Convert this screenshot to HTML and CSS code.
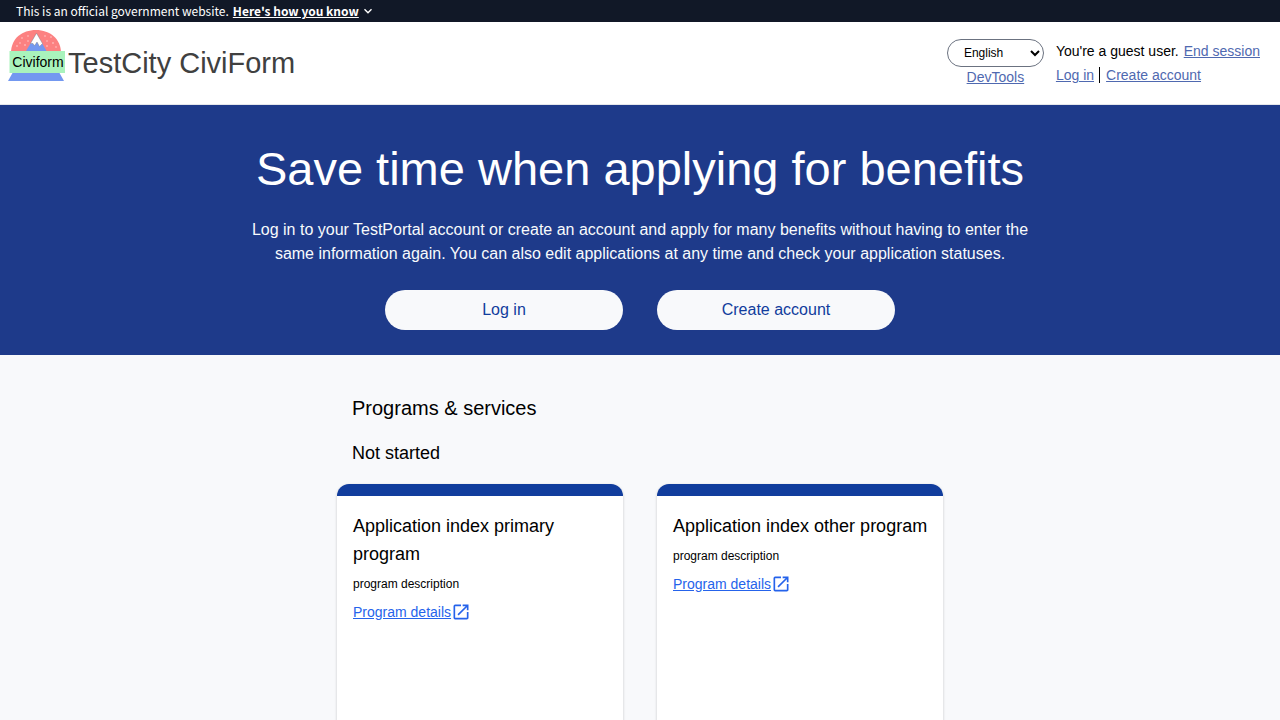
FILE: index.html
```html
<!DOCTYPE html>
<html lang="en">
<head>
<meta charset="utf-8">
<meta name="viewport" content="width=device-width, initial-scale=1">
<title>TestCity CiviForm</title>
<link rel="stylesheet" href="styles.css">
</head>
<body>
<div class="gov-banner">
  <span>This is an official government website.</span>
  <button type="button" class="banner-toggle"><span class="banner-label">Here's how you know</span>
    <svg class="chevron" viewBox="0 0 10 10" aria-hidden="true"><path d="M1.500 3.200 5 6.700 8.500 3.200" fill="none" stroke="currentColor" stroke-width="1.400"/></svg>
  </button>
</div>
<header class="site-header">
  <a class="brand" href="#">
    <svg class="logo" viewBox="0 0 60 56" role="img" aria-label="Civiform">
      <path d="M3 25C3 10.500 14 2 28 2s25 9 25 23z" fill="#fc8181"/>
      <path d="M18 23 28.500 5.500 38.500 23z" fill="#7398f0"/>
      <path d="M22.500 15.500 28.500 5.200 34.500 15.500 31.500 18.500 29 14 26.500 17.800 25 15.500z" fill="#fff" stroke="#777" stroke-width=".4"/>
      <g fill="#fed7d7"><circle cx="20" cy="8" r=".7"/><circle cx="14" cy="10" r=".7"/><circle cx="20" cy="13" r=".7"/><circle cx="12" cy="15" r=".7"/><circle cx="9" cy="18" r=".8"/><circle cx="17" cy="17" r=".8"/><circle cx="37" cy="8" r=".7"/><circle cx="43" cy="9" r=".7"/><circle cx="39" cy="13" r=".7"/><circle cx="45" cy="15" r=".8"/><circle cx="39" cy="18" r=".8"/><circle cx="48" cy="19" r=".7"/></g>
      <path d="M4.500 45h47l4.500 8H0z" fill="#7398f0"/>
      <path d="M1.500 23H57v22H1.500z" fill="#a9f3bc"/>
      <text class="logo-text" x="30" y="39" text-anchor="middle">Civiform</text>
    </svg>
    <span class="brand-name">TestCity CiviForm</span>
  </a>
  <nav class="account" aria-label="Account">
    <div class="tools">
      <select class="language" aria-label="Language"><option>English</option><option>Español</option></select>
      <a href="#">DevTools</a>
    </div>
    <div class="session">
      <div class="guest"><span>You're a guest user.</span><a href="#">End session</a></div>
      <div class="auth"><a href="#">Log in</a><a class="divided" href="#"><span>Create account</span></a></div>
    </div>
  </nav>
</header>
<main>
  <section class="hero">
    <h1>Save time when applying for benefits</h1>
    <p>Log in to your TestPortal account or create an account and apply for many benefits without having to enter the same information again. You can also edit applications at any time and check your application statuses.</p>
    <div class="hero-actions">
      <button type="button">Log in</button>
      <button type="button">Create account</button>
    </div>
  </section>
  <section class="programs">
    <h2>Programs &amp; services</h2>
    <h3>Not started</h3>
    <div class="cards">
      <article class="card">
        <h4>Application index primary program</h4>
        <p>program description</p>
        <a class="details" href="#"><span>Program details</span><svg viewBox="0 0 24 24" aria-hidden="true"><path d="M19 19H5V5h7V3H5a2 2 0 0 0-2 2v14a2 2 0 0 0 2 2h14c1.100 0 2-.9 2-2v-7h-2v7zM14 3v2h3.590l-9.830 9.830 1.410 1.410L19 6.410V10h2V3h-7z" fill="currentColor"/></svg></a>
      </article>
      <article class="card">
        <h4>Application index other program</h4>
        <p>program description</p>
        <a class="details" href="#"><span>Program details</span><svg viewBox="0 0 24 24" aria-hidden="true"><path d="M19 19H5V5h7V3H5a2 2 0 0 0-2 2v14a2 2 0 0 0 2 2h14c1.100 0 2-.9 2-2v-7h-2v7zM14 3v2h3.590l-9.830 9.830 1.410 1.410L19 6.410V10h2V3h-7z" fill="currentColor"/></svg></a>
      </article>
    </div>
  </section>
</main>
</body>
</html>
```
FILE: styles.css
```css
* { box-sizing: border-box; }
body {
  margin: 0;
  background: #f8f9fb;
  color: #000;
  font-family: "Liberation Sans", Arial, sans-serif;
  font-size: 16px;
  line-height: 24px;
}
h1, h2, h3, h4, p { margin: 0; font-weight: 400; }
button { border: 0; font: inherit; cursor: pointer; }

.gov-banner {
  display: flex;
  align-items: center;
  gap: 4px;
  padding: 2px 16px;
  background: #111827;
  color: #fff;
  font-family: "Noto Sans CJK SC", "Noto Sans", sans-serif;
  font-size: 12px;
  line-height: 18px;
}
.banner-toggle {
  display: flex;
  align-items: center;
  gap: 4px;
  padding: 0;
  background: none;
  color: inherit;
  font-weight: 700;
}
.banner-label { text-decoration: underline; }
.chevron { width: 10px; height: 10px; }

.site-header {
  display: flex;
  align-items: flex-start;
  justify-content: space-between;
  padding: 6px 20px 17px 8px;
  background: #fff;
  border-bottom: 1px solid #e5e7eb;
}
.brand {
  display: flex;
  align-items: center;
  color: #404040;
  text-decoration: none;
}
.logo { width: 60px; height: 56px; }
.logo-text { font-size: 14px; }
.brand-name { font-size: 29px; line-height: 36px; padding-top: 14px; }
.account { display: flex; gap: 12px; padding-top: 11px; font-size: 14px; }
.account a { color: #4f69b0; }
.tools { display: flex; flex-direction: column; align-items: center; line-height: 20px; }
.language {
  width: 97px;
  height: 28px;
  padding: 0 0 0 12px;
  border: 1px solid #6b7280;
  border-radius: 14px;
  background: #fff;
  color: #000;
  font: inherit;
  font-size: 12px;
}
.guest { display: flex; gap: 5px; }
.auth { display: flex; align-items: center; }
.auth .divided {
  margin-left: 5px;
  padding-left: 6px;
  border-left: 1px solid #000;
  line-height: 16px;
}

.hero {
  padding: 40px 20px 25px;
  background: #1e3a8a;
  color: #f8fafc;
  text-align: center;
}
.hero h1 { font-size: 47px; line-height: 48px; color: #fff; }
.hero p { max-width: 784px; margin: 25px auto 24px; }
.hero-actions { display: flex; justify-content: center; gap: 34px; }
.hero-actions button {
  width: 238px;
  padding: 8px;
  border-radius: 20px;
  background: #f8f9fb;
  color: #113d9d;
}

.programs { max-width: 606px; margin: 0 auto; padding: 39px 0; }
.programs h2 { padding-left: 15px; font-size: 20px; line-height: 28px; }
.programs h3 { padding: 17px 15px; font-size: 18px; line-height: 28px; }
.cards { display: grid; grid-template-columns: 1fr 1fr; gap: 34px; }
.card {
  min-height: 384px;
  padding: 16px 12px 16px 16px;
  border-top: 12px solid #113d9d;
  border-radius: 12px;
  background: #fff;
  box-shadow: 0 1px 3px rgba(0, 0, 0, .2);
}
.card h4 { font-size: 18px; line-height: 28px; }
.card p { margin: 8px 0; font-size: 12px; line-height: 16px; }
.details {
  display: inline-flex;
  align-items: center;
  color: #2563eb;
  font-size: 14px;
  line-height: 20px;
}
.details svg { width: 20px; height: 20px; }
```
